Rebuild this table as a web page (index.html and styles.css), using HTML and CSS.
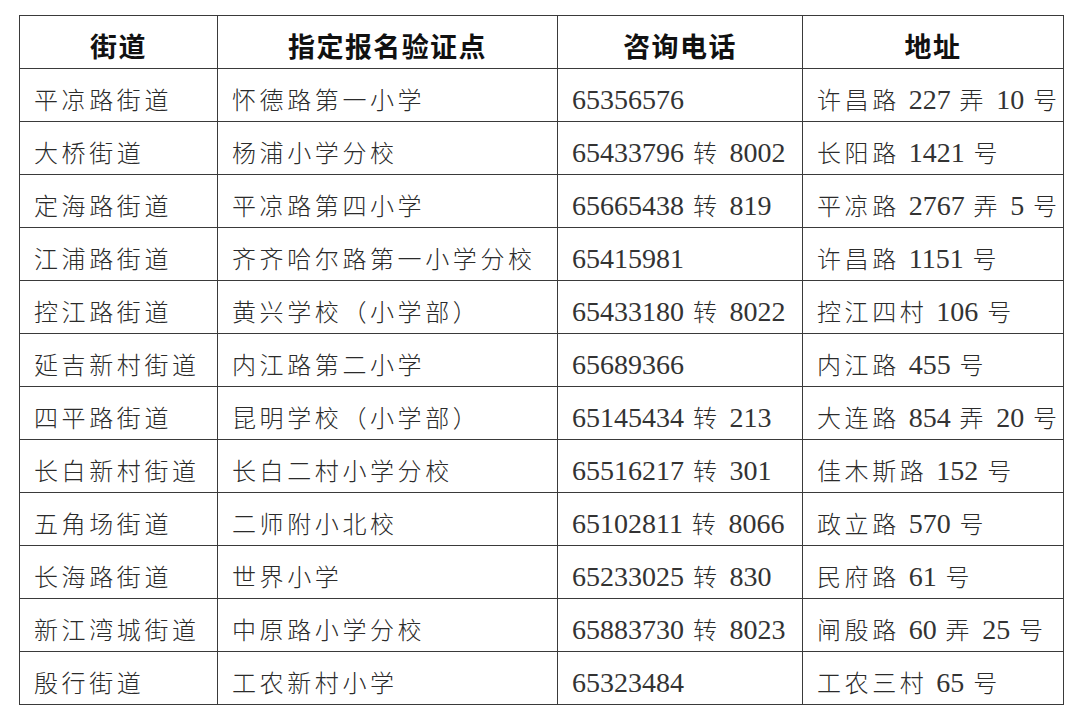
FILE: index.html
```html
<!DOCTYPE html>
<html lang="zh-CN">
<head>
<meta charset="utf-8">
<title>报名验证点</title>
<link rel="stylesheet" href="styles.css">
</head>
<body>
<table class="grid">
  <colgroup>
    <col class="c1"><col class="c2"><col class="c3"><col class="c4">
  </colgroup>
  <thead>
    <tr><th>街道</th><th>指定报名验证点</th><th>咨询电话</th><th>地址</th></tr>
  </thead>
  <tbody>
    <tr><td>平凉路街道</td><td>怀德路第一小学</td><td><span class="n">65356576</span></td><td>许昌路 <span class="n">227</span> 弄 <span class="n">10</span> 号</td></tr>
    <tr><td>大桥街道</td><td>杨浦小学分校</td><td><span class="n">65433796</span> 转 <span class="n">8002</span></td><td>长阳路 <span class="n">1421</span> 号</td></tr>
    <tr><td>定海路街道</td><td>平凉路第四小学</td><td><span class="n">65665438</span> 转 <span class="n">819</span></td><td>平凉路 <span class="n">2767</span> 弄 <span class="n">5</span> 号</td></tr>
    <tr><td>江浦路街道</td><td>齐齐哈尔路第一小学分校</td><td><span class="n">65415981</span></td><td>许昌路 <span class="n">1151</span> 号</td></tr>
    <tr><td>控江路街道</td><td>黄兴学校（小学部）</td><td><span class="n">65433180</span> 转 <span class="n">8022</span></td><td>控江四村 <span class="n">106</span> 号</td></tr>
    <tr><td>延吉新村街道</td><td>内江路第二小学</td><td><span class="n">65689366</span></td><td>内江路 <span class="n">455</span> 号</td></tr>
    <tr><td>四平路街道</td><td>昆明学校（小学部）</td><td><span class="n">65145434</span> 转 <span class="n">213</span></td><td>大连路 <span class="n">854</span> 弄 <span class="n">20</span> 号</td></tr>
    <tr><td>长白新村街道</td><td>长白二村小学分校</td><td><span class="n">65516217</span> 转 <span class="n">301</span></td><td>佳木斯路 <span class="n">152</span> 号</td></tr>
    <tr><td>五角场街道</td><td>二师附小北校</td><td><span class="n">65102811</span> 转 <span class="n">8066</span></td><td>政立路 <span class="n">570</span> 号</td></tr>
    <tr><td>长海路街道</td><td>世界小学</td><td><span class="n">65233025</span> 转 <span class="n">830</span></td><td>民府路 <span class="n">61</span> 号</td></tr>
    <tr><td>新江湾城街道</td><td>中原路小学分校</td><td><span class="n">65883730</span> 转 <span class="n">8023</span></td><td>闸殷路 <span class="n">60</span> 弄 <span class="n">25</span> 号</td></tr>
    <tr><td>殷行街道</td><td>工农新村小学</td><td><span class="n">65323484</span></td><td>工农三村 <span class="n">65</span> 号</td></tr>
  </tbody>
</table>
</body>
</html>
```

FILE: styles.css
```css
html, body {
  margin: 0;
  padding: 0;
  background: #ffffff;
}

body {
  padding: 15px 0 0 19px;
}

.grid {
  border-collapse: collapse;
  table-layout: fixed;
  width: 1044px;
  color: #2b2b2b;
}

.c1 { width: 198px; }
.c2 { width: 340px; }
.c3 { width: 245px; }
.c4 { width: 261px; }

.grid th,
.grid td {
  border: 1.5px solid #3a3a3a;
  height: 53px;
  box-sizing: border-box;
  padding: 6px 0 0 14px;
  white-space: nowrap;
  overflow: hidden;
  vertical-align: middle;
}

.grid th {
  font-family: "Noto Sans CJK SC", "Noto Sans", sans-serif;
  font-weight: 700;
  font-size: 27px;
  letter-spacing: 1.4px;
  text-align: center;
  padding-left: 0;
  color: #111111;
}

.grid td {
  font-family: "Noto Sans CJK SC", sans-serif;
  font-weight: 300;
  font-size: 24px;
  letter-spacing: 3.6px;
  text-align: left;
}

.n {
  font-family: "Liberation Serif", "Times New Roman", serif;
  font-weight: 400;
  font-size: 28px;
  letter-spacing: 0;
  color: #333333;
}
```
